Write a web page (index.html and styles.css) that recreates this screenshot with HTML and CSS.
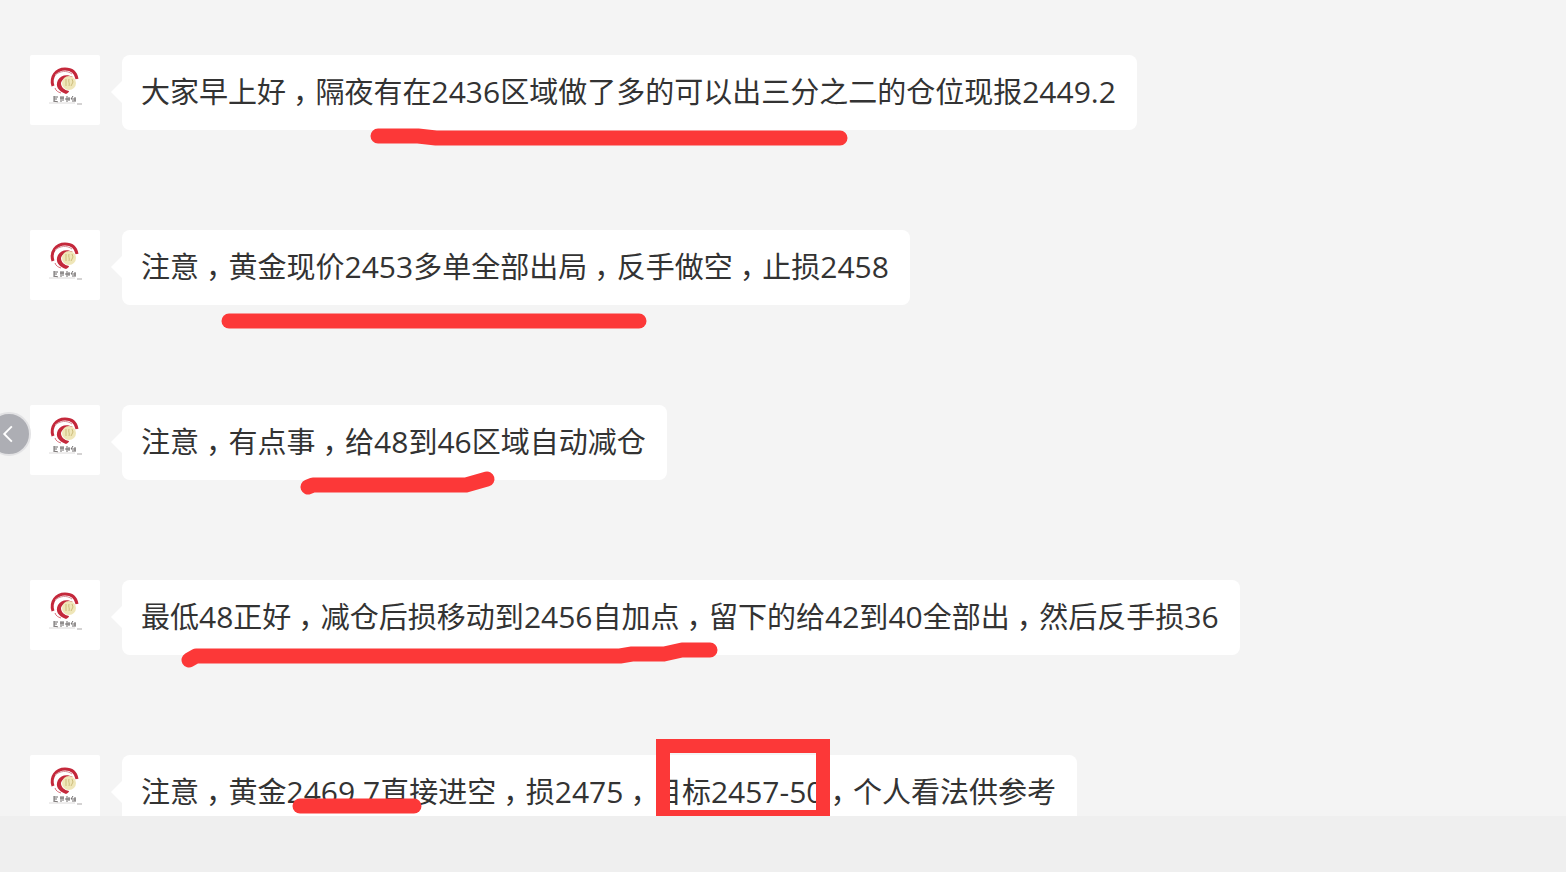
FILE: index.html
```
<!DOCTYPE html>
<html lang="zh-CN">
<head>
    <meta charset="UTF-8">
    <meta name="viewport" content="width=device-width, initial-scale=1.0">
    <title>黄金</title>
    <link rel="stylesheet" href="styles.css">
</head>
<body>
    <!-- Shared avatar logo -->
    <svg class="symbols" aria-hidden="true">
        <symbol id="logo" viewBox="0 0 70 70">
            <path d="M23 31c-3-9 3-17 12-17 7 0 11 4 12 10" fill="none" stroke="#c4283b" stroke-width="3"/>
            <path d="M25 20c5-4 12-5 17-1" fill="none" stroke="#d7909a" stroke-width="1"/>
            <path d="M43 22c-6-3-12-2-15 3-3 6 0 11 8 14 2-1 3-2 3-3-5-1-8-4-8-8 1-4 5-6 12-6z" fill="#c4283b"/>
            <path d="M25 33c1 3 3 4 6 5" fill="none" stroke="#d9707c" stroke-width="1"/>
            <circle cx="39" cy="28" r="7" fill="#efe6b8"/>
            <path d="M36 24v7M39 24c-1 3 1 4 0 7M42 24l1 3-2 4" fill="none" stroke="#cdbd7c" stroke-width="1"/>
            <path d="M24 41v6M24 42h4M24 44h3M24 46l4 1M31 41v6M30 43h4M33 41v5M37 41v6M35 44h5M39 42v4M43 41l-2 3h5M42 46h4M45 42v4" fill="none" stroke="#6f6b6b" stroke-width="1"/>
            <path d="M19 48h26" stroke="#dcdada" stroke-width="1"/>
            <path d="M47 49h5" stroke="#aaa7a7" stroke-width="1"/>
        </symbol>
    </svg>

    <main class="chat">
        <div class="message">
            <svg class="avatar"><use href="#logo"/></svg>
            <div class="bubble">
                <p>大家早上好<i>，</i>隔夜有在<b>2436</b>区域做了多的可以出三分之二的仓位现报<b>2449.2</b></p>
                <svg class="mark"><path d="M256 81h40l18 2h404"/></svg>
            </div>
        </div>
        <div class="message">
            <svg class="avatar"><use href="#logo"/></svg>
            <div class="bubble">
                <p>注意<i>，</i>黄金现价<b>2453</b>多单全部出局<i>，</i>反手做空<i>，</i>止损<b>2458</b></p>
                <svg class="mark"><path d="M107 91h410"/></svg>
            </div>
        </div>
        <div class="message">
            <svg class="avatar"><use href="#logo"/></svg>
            <div class="bubble">
                <p>注意<i>，</i>有点事<i>，</i>给<b>48</b>到<b>46</b>区域自动减仓</p>
                <svg class="mark"><path d="M186 82l5-2h153l7-2 14-4"/></svg>
            </div>
        </div>
        <div class="message">
            <svg class="avatar"><use href="#logo"/></svg>
            <div class="bubble">
                <p>最低<b>48</b>正好<i>，</i>减仓后损移动到<b>2456</b>自加点<i>，</i>留下的给<b>42</b>到<b>40</b>全部出<i>，</i>然后反手损<b>36</b></p>
                <svg class="mark"><path d="M67 80l7-4h424l12-2h32l18-4h28"/></svg>
            </div>
        </div>
        <div class="message">
            <svg class="avatar"><use href="#logo"/></svg>
            <div class="bubble">
                <p>注意<i>，</i>黄金<b>2469.7</b>直接进空<i>，</i>损<b>2475</b><i>，</i>目标<b>2457-50</b><i>，</i>个人看法供参考</p>
                <svg class="mark"><path d="M178 51h114"/><path class="box" d="M541-9h160v71h-160z"/></svg>
            </div>
        </div>
    </main>

    <button class="prev" type="button" aria-label="上一张">
        <svg viewBox="0 0 42 42"><path d="M24 13l-8 8 8 8"/></svg>
    </button>

    <footer class="bottom-bar"></footer>
</body>
</html>
```

FILE: styles.css
```
* {
    box-sizing: border-box;
    margin: 0;
    padding: 0;
}

body {
    display: flex;
    flex-direction: column;
    height: 100vh;
    overflow: hidden;
    font-family: "Noto Sans CJK SC", sans-serif;
    font-size: 29px;
    line-height: 42px;
    color: #333;
    background-color: #f4f4f4;
}

.symbols {
    position: absolute;
    width: 0;
    height: 0;
}

.chat {
    flex: 1;
    min-height: 0;
    overflow: hidden;
    display: flex;
    flex-direction: column;
    gap: 100px;
    padding: 55px 30px 0;
}

.message {
    display: flex;
    align-items: flex-start;
    gap: 22px;
}

.avatar {
    flex: none;
    width: 70px;
    height: 70px;
    border-radius: 2px;
    background-color: #fff;
}

.bubble {
    position: relative;
    padding: 14px 21px 19px 19px;
    border-radius: 8px;
    background-color: #fff;
    white-space: nowrap;
}

/* arrow pointing to the avatar */
.bubble::before {
    content: "";
    position: absolute;
    top: 26px;
    left: -11px;
    border: 11px solid transparent;
    border-left: 0;
    border-right-color: #fff;
}

.bubble b {
    font-family: "Open Sans", sans-serif;
    font-size: 30px;
    font-weight: normal;
    line-height: 1;
}

/* full-width comma centred in its cell */
.bubble i {
    font-style: normal;
    font-feature-settings: "halt";
    padding: 0 8px 0 7px;
}

.mark {
    position: absolute;
    top: 0;
    left: 0;
    width: 100%;
    height: 100%;
    overflow: visible;
    fill: none;
    stroke: #fc3838;
    stroke-width: 15;
    stroke-linecap: round;
    stroke-linejoin: round;
}

.mark .box {
    stroke-width: 14;
    stroke-linejoin: miter;
}

.prev {
    position: fixed;
    top: 50%;
    left: -13px;
    width: 44px;
    height: 44px;
    margin-top: -24px;
    border: 2px solid #e2e2e4;
    border-radius: 50%;
    background-color: #adaeb4;
    cursor: pointer;
}

.prev svg {
    display: block;
    width: 100%;
    fill: none;
    stroke: #fff;
    stroke-width: 2;
}

.bottom-bar {
    flex: none;
    height: 56px;
    background-color: #efefef;
}
```
